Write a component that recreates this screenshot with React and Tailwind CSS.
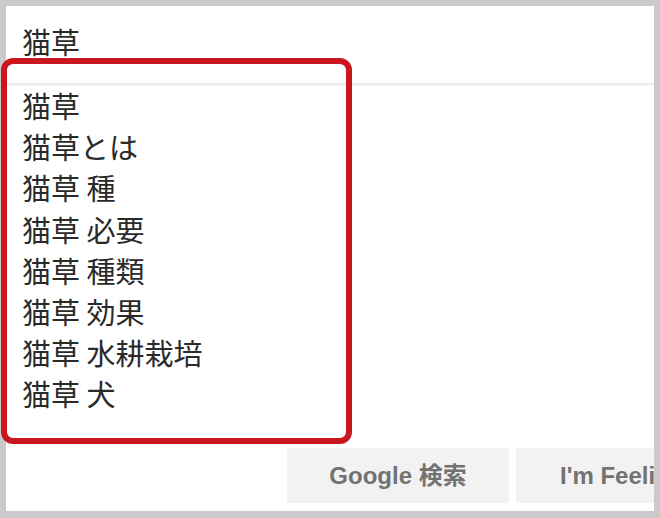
// App.jsx
// Search suggestion list (猫草) with a red highlight frame drawn over it.

const suggestions = [
  '猫草',
  '猫草とは',
  '猫草 種',
  '猫草 必要',
  '猫草 種類',
  '猫草 効果',
  '猫草 水耕栽培',
  '猫草 犬',
];

const cjk = "font-['Noto_Sans_CJK_JP','Liberation_Sans',sans-serif]";

function App() {
  return (
    <div className="relative w-[660px] h-[518px] bg-[#cacaca] pt-[6px] px-[6px] pb-[7px]">
      {/* ── Screenshot area ─────────────────────────────────────── */}
      <div className="h-full bg-white flex flex-col overflow-hidden">
        {/* Search input text */}
        <div className={`h-[77px] pl-[16px] pb-[5px] flex items-center text-[29px] text-[#2a2a2a] ${cjk}`}>
          猫草
        </div>
        <div className="h-[2px] bg-[#ebebeb] shadow-[0_1px_1px_rgba(0,0,0,0.03)]" />

        {/* Suggestions */}
        <ul className={`pl-[16px] text-[29px] leading-[41.2px] text-[#2a2a2a] ${cjk}`}>
          {suggestions.map((s, i) => (
            <li key={i}>{s}</li>
          ))}
        </ul>

        {/* Buttons */}
        <div className="mt-auto mb-[8px] pl-[281px] flex gap-[7px] font-['Liberation_Sans','Noto_Sans_CJK_JP',sans-serif]">
          <button
            type="button"
            className="shrink-0 w-[222px] h-[55px] bg-[#f2f2f2] rounded-[2px] text-[24px] font-bold text-[#727272]"
          >
            Google 検索
          </button>
          <button
            type="button"
            className="shrink-0 w-[200px] h-[55px] bg-[#f2f2f2] rounded-[2px] text-[24px] font-bold text-[#727272] text-left pl-[44px] whitespace-nowrap"
          >
            I'm Feeling Lucky
          </button>
        </div>
      </div>

      {/* ── Red highlight annotation (overlay) ──────────────────── */}
      <div className="absolute left-[1px] top-[58px] w-[351px] h-[386px] border-[6px] border-[#c9161f] rounded-[12px] pointer-events-none" />
    </div>
  );
}

export default App;
